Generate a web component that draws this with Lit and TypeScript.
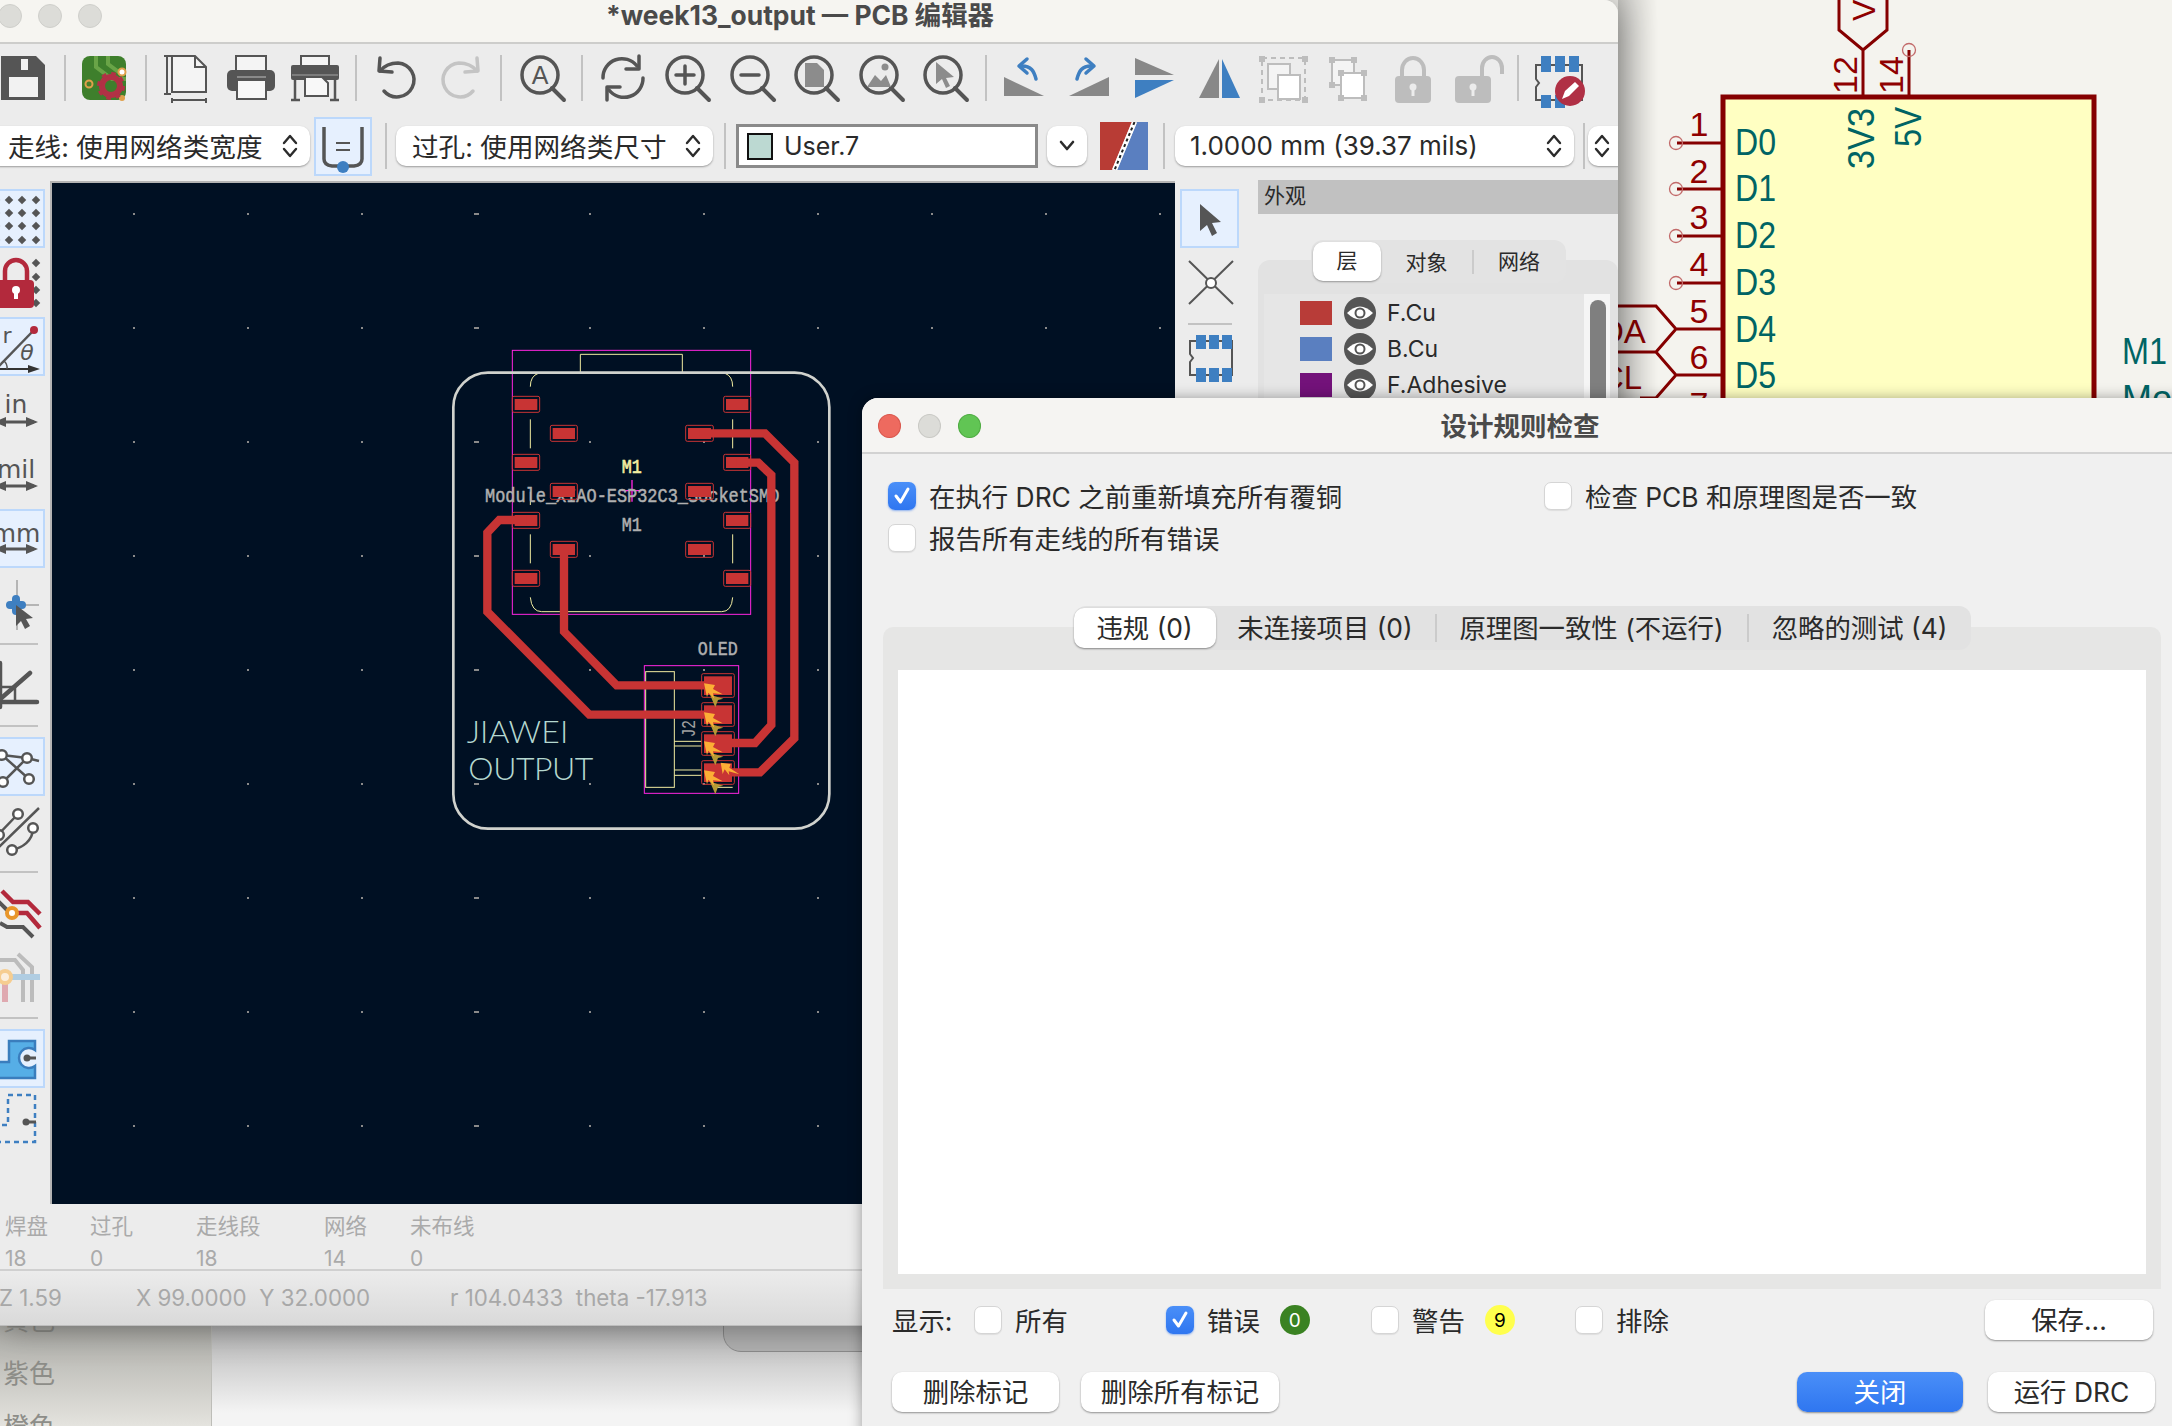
import { LitElement, html, svg, css } from "lit";
import { customElement } from "lit/decorators.js";

const G = "#555";
const LIGHT = "#bdbdbd";

const box = (body: unknown) => html`<svg class="ic" viewBox="0 0 46 46" width="46" height="46">${body}</svg>`;

const mag = (inner: unknown) => box(svg`
  <circle cx="21" cy="20" r="18" fill="none" stroke=${G} stroke-width="3.5"></circle>
  <line x1="33" y1="33" x2="45" y2="45" stroke=${G} stroke-width="4" stroke-linecap="round"></line>
  ${inner}`);

const undoPath = (c: string) => svg`
  <path d="M7 16C12 10 18 8 25 8A17 17 0 1 1 11 36" fill="none" stroke=${c} stroke-width="3.5" stroke-linecap="round"></path>
  <path d="M7 3L6 16L19 17" fill="none" stroke=${c} stroke-width="3.5" stroke-linecap="round" stroke-linejoin="round"></path>`;

const toolbar = [
  box(svg`<path d="M0 1H35L44 10V45H0Z" fill=${G}></path>
    <rect x="20" y="4" width="7" height="11" fill="#f2f2f2"></rect>
    <rect x="8" y="22" width="29" height="20" fill="#f2f2f2"></rect>`),
  null,
  box(svg`<rect x="0" y="1" width="44" height="44" rx="8" fill="#3e7f2c"></rect>
    <path d="M14 1L14 12L30 24L44 24M26 1L26 9L38 18L44 18" fill="none" stroke="#69a447" stroke-width="4"></path>
    <circle cx="7" cy="29" r="3.5" fill="#4a7f2c" stroke="#e0a04a" stroke-width="2"></circle>
    <circle cx="40" cy="17" r="3.5" fill="#fff" stroke="#e0a04a" stroke-width="2"></circle>
    <circle cx="40" cy="43" r="3" fill="#e0a04a"></circle>
    <circle cx="29" cy="31" r="9" fill="none" stroke="#b13245" stroke-width="6"></circle>
    <circle cx="29" cy="31" r="12" fill="none" stroke="#b13245" stroke-width="4" stroke-dasharray="4.5 4.9"></circle>`),
  null,
  box(svg`<path d="M9 1H32L43 12V37H9Z" fill="#f4f4f4" stroke=${G} stroke-width="2"></path>
    <path d="M32 1V12H43" fill="none" stroke=${G} stroke-width="2"></path>
    <path d="M1 1H8M4 1V39M1 39H8M9 43V48M43 43V48M9 45H43" fill="none" stroke=${G} stroke-width="2"></path>`),
  box(svg`<rect x="8" y="1" width="30" height="16" fill="#f4f4f4" stroke=${G} stroke-width="2"></rect>
    <rect x="-1" y="15" width="48" height="21" rx="5" fill=${G}></rect>
    <line x1="9" y1="22" x2="38" y2="22" stroke="#8a8a8a" stroke-width="2"></line>
    <path d="M9 25H38V44H9Z" fill="#f8f8f8" stroke=${G} stroke-width="2"></path>`),
  box(svg`<rect x="9" y="1" width="28" height="10" fill="#f4f4f4" stroke=${G} stroke-width="2"></rect>
    <rect x="-1" y="10" width="48" height="15" rx="2" fill=${G}></rect>
    <line x1="0" y1="20" x2="46" y2="20" stroke="#8a8a8a" stroke-width="1.5"></line>
    <path d="M13 22H30L36 28V41H13Z" fill="#f8f8f8" stroke=${G} stroke-width="2"></path>
    <path d="M3 25V45M43 25V45M-1 45H8M38 45H47" fill="none" stroke=${G} stroke-width="2.5"></path>`),
  null,
  box(undoPath(G)),
  box(svg`<g transform="translate(46 0) scale(-1 1)">${undoPath("#c4c4c4")}</g>`),
  null,
  mag(svg`<text x="21" y="29" text-anchor="middle" class="ictxt" font-size="25" fill=${G}>A</text>`),
  null,
  box(svg`<path d="M3 23A19 19 0 0 1 37 11M43 23A19 19 0 0 1 9 35" fill="none" stroke=${G} stroke-width="3.5" stroke-linecap="round"></path>
    <path d="M39 1L39 14L26 14M7 45L7 32L20 32" fill="none" stroke=${G} stroke-width="3.5" stroke-linecap="round" stroke-linejoin="round"></path>`),
  mag(svg`<path d="M21 11V29M12 20H30" stroke=${G} stroke-width="3.5" stroke-linecap="round"></path>`),
  mag(svg`<path d="M12 20H30" stroke=${G} stroke-width="3.5" stroke-linecap="round"></path>`),
  mag(svg`<path d="M12 8H24L31 15V32H12Z" fill="#8c8c8c"></path>`),
  mag(svg`<path d="M9 32L17 20L23 26L28 20L33 32Z" fill="#8c8c8c"></path><circle cx="27" cy="12" r="3.5" fill="#8c8c8c"></circle>`),
  mag(svg`<path d="M14 7L14 29L20 24L24 33L28 31L24 23L32 22Z" fill="#8c8c8c"></path>`),
  null,
  box(svg`<path d="M1 41H41L1 22Z" fill="#888"></path>
    <path d="M33 24C31 16 28 11 19 11" fill="none" stroke="#3e7fc1" stroke-width="3.5" stroke-linecap="round"></path>
    <path d="M24 4L16 11L24 18" fill="none" stroke="#3e7fc1" stroke-width="3.5" stroke-linecap="round" stroke-linejoin="round"></path>`),
  box(svg`<path d="M1 41H41V22Z" fill="#888"></path>
    <path d="M9 24C11 16 14 11 23 11" fill="none" stroke="#3e7fc1" stroke-width="3.5" stroke-linecap="round"></path>
    <path d="M18 4L26 11L18 18" fill="none" stroke="#3e7fc1" stroke-width="3.5" stroke-linecap="round" stroke-linejoin="round"></path>`),
  box(svg`<path d="M3 3L42 20H3Z" fill="#888"></path><path d="M3 25H42L3 43Z" fill="#3e7fc1"></path>`),
  box(svg`<path d="M22 4V43H2Z" fill="#888"></path><path d="M25 4L43 43H25Z" fill="#3e7fc1"></path>`),
  box(svg`<rect x="1" y="3" width="43" height="42" fill="none" stroke=${LIGHT} stroke-width="2" stroke-dasharray="5 4"></rect>
    <path d="M-2 1h6v6h-6zM41 1h6v6h-6zM-2 42h6v6h-6zM41 42h6v6h-6z" fill=${LIGHT}></path>
    <rect x="7" y="9" width="22" height="25" fill="#f4f4f4" stroke=${LIGHT} stroke-width="2"></rect>
    <rect x="17" y="20" width="22" height="24" fill="#fff" stroke=${LIGHT} stroke-width="2"></rect>`),
  box(svg`<rect x="6" y="5" width="22" height="25" fill="#f4f4f4" stroke=${LIGHT} stroke-width="2"></rect>
    <rect x="15" y="18" width="23" height="25" fill="#fff" stroke=${LIGHT} stroke-width="2"></rect>
    <path d="M3 2h6v6h-6zM25 2h6v6h-6zM3 27h6v6h-6zM12 15h6v6h-6zM35 15h6v6h-6zM12 40h6v6h-6zM35 40h6v6h-6z" fill=${LIGHT}></path>`),
  box(svg`<path d="M12 24V15A11 12 0 0 1 34 15V24" fill="none" stroke=${LIGHT} stroke-width="4"></path>
    <rect x="5" y="21" width="36" height="27" rx="4" fill=${LIGHT}></rect>
    <circle cx="23" cy="32" r="3.5" fill="#ececec"></circle><rect x="21.5" y="32" width="3" height="9" fill="#ececec"></rect>`),
  box(svg`<path d="M27 24V13A10 11 0 0 1 47 13V19" fill="none" stroke=${LIGHT} stroke-width="4"></path>
    <rect x="0" y="21" width="36" height="27" rx="4" fill=${LIGHT}></rect>
    <circle cx="18" cy="32" r="3.5" fill="#ececec"></circle><rect x="16.5" y="32" width="3" height="9" fill="#ececec"></rect>`),
  null,
  box(svg`<path d="M0 10H46V45H0V32L3 28L0 24Z" fill="none" stroke=${G} stroke-width="2"></path>
    <path d="M5 1H15V17H5ZM19 1H29V17H19ZM33 1H43V17H33ZM5 40H15V53H5ZM19 40H29V53H19Z" fill="#3e7fc1"></path>
    <circle cx="34" cy="36" r="15" fill="#b03045"></circle>
    <path d="M26 44L29 36L39 27L43 31L33 41Z" fill="#fff"></path>`),
];

const btn = (body: unknown, on = false) => html`<div class="tbtn ${on ? "on" : ""}"><svg class="ic" viewBox="-14 0 59 59" width="59" height="59">${body}</svg></div>`;
const sideSep = html`<div class="sidesep"></div>`;

const dots = [-4, 9, 22, 36].flatMap((x) => [11, 24, 37, 51].map((y) => svg`<rect x=${x - 3} y=${y - 3} width="6" height="6" transform="rotate(45 ${x} ${y})" fill=${G}></rect>`));
const arrow2 = (y: number) => svg`<path d="M-4 ${y}H34" stroke=${G} stroke-width="3"></path><path d="M-6 ${y}L6 ${y - 5}V${y + 5}ZM38 ${y}L26 ${y - 5}V${y + 5}Z" fill=${G}></path>`;
const unit = (t: string, y: number, arrowY: number) => svg`<text x="16" y=${y} text-anchor="middle" class="ictxt dj" font-size="25" fill=${G}>${t}</text>${arrow2(arrowY)}`;
const ring = (x: number, y: number) => svg`<circle cx=${x} cy=${y} r="4.8" fill="#fff" stroke=${G} stroke-width="2.5"></circle>`;

const leftTools = [
  btn(dots, true),
  btn(svg`${[10, 24, 37, 50].map((y) => svg`<rect x="33" y=${y - 3} width="6" height="6" transform="rotate(45 36 ${y})" fill=${G}></rect>`)}
    <path d="M5 28V18A11 11 0 0 1 27 18V28" fill="none" stroke="#b3293c" stroke-width="4.5"></path>
    <rect x="-14" y="27" width="48" height="28" rx="4" fill="#b3293c"></rect>
    <circle cx="16" cy="37" r="4" fill="#fff"></circle><rect x="14" y="37" width="4" height="9" fill="#fff"></rect>`),
  btn(svg`<text x="7" y="26" text-anchor="middle" class="ictxt dj" font-size="22" fill=${G}>r</text>
    <text x="27" y="43" text-anchor="middle" class="ictxt dj" font-style="italic" font-size="22" fill=${G}>θ</text>
    <line x1="-2" y1="50" x2="34" y2="13" stroke=${G} stroke-width="2.5"></line>
    <circle cx="34" cy="13" r="4" fill="#b3293c"></circle>
    <path d="M-14 52H28" stroke="#333" stroke-width="2"></path><path d="M40 52L28 48V56Z" fill="#333"></path>
    <path d="M7 52A9 9 0 0 0 4 44" fill="none" stroke=${G} stroke-width="1.5"></path>`, true),
  btn(unit("in", 32, 41)),
  btn(unit("mil", 33, 41)),
  btn(unit("mm", 33, 40), true),
  btn(svg`<path d="M17 7V57M6 32H39" stroke="#b5b5b5" stroke-width="2"></path>
    <path d="M16 26V38M10 32H22" stroke="#3e7fc1" stroke-width="8" stroke-linecap="round"></path>
    <path d="M16 32V53L21 48L25 56L30 53L26 46L33 45Z" fill=${G}></path>`),
  sideSep,
  btn(svg`<path d="M0 8V52M-6 47H37" stroke=${G} stroke-width="4.5" stroke-linecap="round" fill="none"></path>
    <path d="M-3 47L30 18" stroke=${G} stroke-width="4.5" stroke-linecap="round"></path>
    <path d="M15 32V47M0 32H15" stroke=${G} stroke-width="2.5" fill="none"></path>`),
  sideSep,
  btn(svg`<path d="M2 18L27 21L39 24M2 18L29 42M3 45L27 21" fill="none" stroke=${G} stroke-width="2.5"></path>
    ${ring(2, 18)}${ring(27, 21)}${ring(3, 45)}${ring(29, 42)}`, true),
  btn(svg`<path d="M18 13L-6 38M-2 47L39 7M12 49C22 47 33 40 33 27" fill="none" stroke=${G} stroke-width="2.5"></path>
    ${ring(18, 13)}${ring(33, 27)}${ring(12, 49)}${ring(-1, 34)}`),
  sideSep,
  btn(svg`<path d="M2 8L13 19H28L40 31M18 30H27L40 45" fill="none" stroke="#b3293c" stroke-width="4.5"></path>
    <path d="M-3 17L7 27M0 40L7 44H23L33 54" fill="none" stroke=${G} stroke-width="4"></path>
    <circle cx="12" cy="30" r="5" fill="#fff" stroke="#e8962a" stroke-width="4"></circle>`),
  btn(svg`<path d="M-3 13H15L23 23V55M18 7L32 20V55" fill="none" stroke="#bcbcbc" stroke-width="4"></path>
    <line x1="12" y1="30" x2="40" y2="30" stroke="#b0cde2" stroke-width="6"></line>
    <line x1="5" y1="36" x2="5" y2="55" stroke="#dfa9b0" stroke-width="6"></line>
    <circle cx="5" cy="30" r="6" fill="#fbeedd" stroke="#f6cd90" stroke-width="4"></circle>`),
  sideSep,
  btn(svg`<path d="M-14 33H9V12H35V21A10 10 0 1 0 35 37V49H-14Z" fill="#56aee6" stroke="#3a7dbd" stroke-width="2.5"></path>
    <circle cx="27" cy="29" r="3.5" fill=${G}></circle><path d="M27 29H36" stroke=${G} stroke-width="3"></path>`, true),
  btn(svg`<path d="M-4 49H35V2H8V32H-4" fill="none" stroke="#3e7fc1" stroke-width="2.5" stroke-dasharray="5 4"></path>
    <circle cx="26" cy="29" r="3.5" fill=${G}></circle><path d="M26 29H36" stroke=${G} stroke-width="3"></path>`),
];

const chevron = html`<svg class="chev" viewBox="0 0 16 28" width="16" height="28">
  <path d="M2 11L8 4L14 11M2 17L8 24L14 17" fill="none" stroke="#2b2b2b" stroke-width="2.4" stroke-linecap="round" stroke-linejoin="round"></path></svg>`;

const gridX = Array.from({ length: 10 }, (_, i) => 134 + i * 114);
const gridY = Array.from({ length: 9 }, (_, i) => 214 + i * 114);

const pad = (x: number, y: number, w: number, h: number) => svg`
  <rect x=${x} y=${y} width=${w} height=${h} rx="5" fill="none" stroke="#c83434" stroke-width="3"></rect>
  <rect x=${x + 7} y=${y + 8} width=${w - 14} height=${h - 15} fill="#c83434"></rect>`;

const marker = (x: number, y: number) => svg`<g transform="translate(${x} ${y})">
  <path d="M18 34L58 46L42 50L34 72Z" fill="#b49a35"></path>
  <path d="M0 0L33 5L27 17L56 33L27 30L31 46L13 28L9 42Z" fill="#fcae35"></path></g>`;

const pcb = html`<svg class="board" viewBox="52 181 1123 1023" width="1123" height="1023">
  ${gridX.flatMap((x) => gridY.map((y) => x === 476
    ? svg`<rect x=${x - 2} y=${y - 1} width="5" height="2" fill="#8a8a8a"></rect>`
    : svg`<rect x=${x - 1} y=${y - 1} width="2" height="2" fill="#8a8a8a"></rect>`))}
  <g transform="translate(440 340) scale(.33333)">
    <rect x="217" y="31" width="715" height="792" fill="none" stroke="#ff26e2" stroke-width="3"></rect>
    <rect x="613" y="977" width="283" height="383" fill="none" stroke="#ff26e2" stroke-width="3"></rect>
    <path d="M421 98V43H727V98M271 140Q271 108 295 100M855 100Q878 108 878 140M271 238V325M878 238V325M271 583V670M878 583V670M271 455V495M271 772Q275 815 305 815H845Q875 815 878 772" fill="none" stroke="#f2eda1" stroke-width="3"></path>
    <rect x="617" y="995" width="86" height="347" fill="none" stroke="#f2eda1" stroke-width="3"></rect>
    <path d="M703 1204H785M703 1218H785M703 1290H785M703 1306H785M830 1342H878" fill="none" stroke="#f2eda1" stroke-width="3"></path>
    <rect x="40" y="98" width="1128" height="1368" rx="104" fill="none" stroke="#d0d2cd" stroke-width="8"></rect>
    <path d="M576 420V485M545 452H605" stroke="#ff26e2" stroke-width="4"></path>
    <text x="135" y="485" textLength="883" lengthAdjust="spacingAndGlyphs" class="mono" font-size="58" fill="#b0b0b0" stroke="#b0b0b0" stroke-width="1.5">Module_XIAO-ESP32C3_SocketSMD</text>
    <text x="545" y="398" textLength="60" lengthAdjust="spacingAndGlyphs" class="mono" font-size="58" fill="#f2eda1" stroke="#f2eda1" stroke-width="2">M1</text>
    <text x="545" y="572" textLength="60" lengthAdjust="spacingAndGlyphs" class="mono" font-size="58" fill="#b0b0b0" stroke="#b0b0b0" stroke-width="1.5">M1</text>
    <text x="773" y="946" textLength="120" lengthAdjust="spacingAndGlyphs" class="mono" font-size="58" fill="#b0b0b0" stroke="#b0b0b0" stroke-width="1.5">OLED</text>
    <text transform="translate(766 1192) rotate(-90)" textLength="52" lengthAdjust="spacingAndGlyphs" class="mono" font-size="58" fill="#a0a0a0">J2</text>
    <text x="80" y="1210" textLength="305" class="thin" font-size="96" fill="#b5d8d0">JIAWEI</text>
    <text x="85" y="1320" textLength="375" class="thin" font-size="96" fill="#b5d8d0">OUTPUT</text>
    ${[169, 343, 517, 691].map((y) => svg`${pad(217, y, 82, 48)}${pad(851, y, 81, 48)}`)}
    ${[256, 430, 604].map((y) => svg`${pad(331, y, 81, 48)}${pad(737, y, 83, 48)}`)}
    ${[1001, 1088, 1175, 1262].map((y) => pad(785, y, 98, 71))}
    <path d="M780 280H975L1063 368V1195L960 1297H870M890 368H955L994 405V1155L945 1209H830M260 540H178L142 578V815L448 1124H800M372 628V875L530 1036H800" fill="none" stroke="#c83434" stroke-width="25"></path>
    ${[1030, 1117, 1204, 1291].map((y) => marker(792, y))}
    <path d="M842 1268L872 1272L868 1283L898 1303L866 1294L868 1306L854 1288L848 1302Z" fill="#fcae35"></path>
  </g>
</svg>`;

const PIN_Y = [143, 189, 236, 283, 329, 375];
const LABEL_Y = [155, 201, 248, 295, 342, 388];
const NUM_Y = [136, 183, 229, 276, 323, 369];

const schematic = html`<svg class="sch" viewBox="1600 0 572 420" width="572" height="420">
  <rect x="1723" y="97" width="371" height="330" fill="#ffffc2" stroke="#850000" stroke-width="5"></rect>
  <path d="M1839 -2V30L1863 50L1887 30V-2M1863 50V97" fill="none" stroke="#850000" stroke-width="3"></path>
  <path d="M1909 50V97" stroke="#850000" stroke-width="3"></path>
  <circle cx="1909" cy="50" r="6.5" fill="none" stroke="#c26a6a" stroke-width="1.3"></circle>
  <text transform="translate(1875 21) rotate(-90)" class="sc red" font-size="32">V</text>
  <text transform="translate(1857 94) rotate(-90)" class="sc red" font-size="34">12</text>
  <text transform="translate(1903 94) rotate(-90)" class="sc red" font-size="34">14</text>
  <text transform="translate(1874 169) rotate(-90)" textLength="61" lengthAdjust="spacingAndGlyphs" class="sc teal" font-size="36">3V3</text>
  <text transform="translate(1921 147) rotate(-90)" textLength="40" lengthAdjust="spacingAndGlyphs" class="sc teal" font-size="36">5V</text>
  ${PIN_Y.map((y, i) => svg`
    <path d="M1677 ${y}H1723" stroke="#850000" stroke-width="3"></path>
    ${i < 4 ? svg`<circle cx="1676" cy=${y} r="6.5" fill="none" stroke="#c26a6a" stroke-width="1.3"></circle>` : ""}
    <text x="1699" y=${NUM_Y[i]} text-anchor="middle" class="sc red" font-size="34">${i + 1}</text>
    <text x="1735" y=${LABEL_Y[i]} textLength="41" lengthAdjust="spacingAndGlyphs" class="sc teal" font-size="36">D${i}</text>`)}
  <text x="1699" y="416" text-anchor="middle" class="sc red" font-size="34">7</text>
  <path d="M1600 306H1656L1676 329L1656 352H1600M1656 352L1676 375L1656 398H1640" fill="none" stroke="#850000" stroke-width="3"></path>
  <text x="1600" y="343" class="sc red" font-size="33">DA</text>
  <text x="1600" y="389" class="sc red" font-size="33">CL</text>
  <text x="2122" y="364" textLength="45" lengthAdjust="spacingAndGlyphs" class="sc teal" font-size="36">M1</text>
  <text x="2122" y="411" class="sc teal" font-size="36">Mo</text>
</svg>`;

const eye = html`<svg viewBox="-16 -16 32 32" width="32" height="32">
  <circle r="16" fill=${G}></circle>
  <path d="M-13 0Q0 -13 13 0Q0 13 -13 0Z" fill="#fff"></path>
  <circle r="4.5" fill="#fff" stroke=${G} stroke-width="2"></circle></svg>`;

const check = html`<svg viewBox="0 0 28 28" width="28" height="28">
  <path d="M8 14L12.5 20L20 7" fill="none" stroke="#fff" stroke-width="3" stroke-linecap="round" stroke-linejoin="round"></path></svg>`;

const cb = (on = false) => html`<span class="cb ${on ? "on" : ""}">${on ? check : ""}</span>`;

@customElement("app-root")
export class AppRoot extends LitElement {
  static styles = css`
    :host {
      display: block;
      position: relative;
      width: 2172px;
      height: 1426px;
      overflow: hidden;
      background: #f4f3ee;
      font-family: Inter, "Noto Sans CJK SC", sans-serif;
      color: #2a2a2a;
    }
    .ic { overflow: visible; display: block; }
    .ic text, .ictxt { font-family: "Liberation Sans", sans-serif; }
    .ictxt.dj { font-family: "DejaVu Sans", sans-serif; }

    /* windows on the desktop */
    .sch { position: absolute; left: 1600px; top: 0; }
    .sc { font-family: "Liberation Sans", sans-serif; }
    .red { fill: #8f0000; }
    .teal { fill: #006464; }
    .back {
      position: absolute;
      left: 0;
      top: 1294px;
      width: 900px;
      height: 132px;
      display: flex;
    }
    .back-side {
      width: 212px;
      padding-left: 3px;
      box-sizing: border-box;
      background: linear-gradient(#9c9c97, #e4e3de);
      color: #8d8d88;
      font-size: 26px;
      line-height: 53px;
      border-right: 1px solid #bdbdb8;
    }
    .back-main {
      flex: 1;
      background: linear-gradient(#9f9f9f, #b9b9b9 28%, #f4f4f4 90%);
    }
    .back-box {
      margin: 0 0 0 511px;
      height: 56px;
      border: 1px solid #8c8c8c;
      border-radius: 0 0 0 18px;
      background: #b2b2b2;
    }
    .pcbwin {
      position: absolute;
      left: 0;
      top: 0;
      width: 1618px;
      height: 1326px;
      background: #ececec;
      border-radius: 0 14px 0 0;
      overflow: hidden;
      display: flex;
      flex-direction: column;
      box-shadow: 0 0 36px rgba(0, 0, 0, .45);
    }
    .pcbshadow {
      position: absolute;
      left: 1618px;
      top: 0;
      width: 40px;
      height: 400px;
      background: linear-gradient(90deg, rgba(0, 0, 0, .16), rgba(0, 0, 0, 0));
    }
    .title {
      height: 44px;
      flex: none;
      box-sizing: border-box;
      background: #f6f5f1;
      border-bottom: 2px solid #cdcdcb;
      display: flex;
      align-items: flex-start;
      justify-content: center;
      padding-right: 18px;
      font-weight: 700;
      font-size: 26.4px;
      line-height: 30px;
      color: #4a4a4a;
      position: relative;
    }
    .lights { position: absolute; left: -2px; top: 4px; display: flex; gap: 16px; }
    .lights i { width: 24px; height: 24px; border-radius: 50%; background: #dcdcd8; border: 1px solid #cfcfcb; box-sizing: border-box; }

    .tools {
      height: 71px;
      flex: none;
      box-sizing: border-box;
      padding: 11px 0 0 0;
      margin-left: 1px;
      display: flex;
      gap: 18.5px;
    }
    .vsep { width: 2px; height: 46px; margin: 0 -2px; background: #c2c2c2; flex: none; }

    .row2 { height: 65px; flex: none; box-sizing: border-box; padding-bottom: 3px; display: flex; align-items: center; }
    .sel {
      height: 40px;
      box-sizing: border-box;
      flex: none;
      background: #fff;
      border-radius: 10px;
      box-shadow: 0 1px 2px rgba(0, 0, 0, .35);
      display: flex;
      align-items: center;
      justify-content: space-between;
      font-size: 26.6px;
      padding-right: 12px;
    }
    .sel span { margin-top: -2px; }
    .s1 { margin-left: -10px; width: 320px; padding-left: 18px; }
    .s2 { margin-left: 9px; width: 317px; padding-left: 16px; }
    .s3 { margin-left: 10px; width: 399px; padding-left: 15px; font-size: 26px; }
    .s4 { margin-left: 3px; width: 40px; padding: 0 0 0 6px; }
    .hl {
      margin-left: 4px;
      width: 58px;
      height: 59px;
      box-sizing: border-box;
      flex: none;
      background: #e6f0fe;
      border: 2px solid #bcd8fb;
    }
    .rsep { width: 2px; height: 46px; background: #c2c2c2; flex: none; }
    .m13 { margin-left: 13px; }
    .m10 { margin-left: 11px; }
    .m15 { margin-left: 15px; }
    .m9 { margin-left: 9px; }
    .layer {
      margin-left: 10px;
      width: 302px;
      height: 44px;
      box-sizing: border-box;
      flex: none;
      background: #fff;
      border: 3px solid #8a8a8a;
      display: flex;
      align-items: center;
      padding-left: 8px;
      gap: 11px;
      font-size: 25px;
    }
    .swatch { width: 26px; height: 27px; box-sizing: border-box; background: #bcd9d2; border: 2px solid #111; }
    .drop { margin-left: 9px; width: 40px; padding: 0; justify-content: center; }
    .swap { margin-left: 13px; flex: none; display: block; }

    .main { flex: 1; display: flex; min-height: 0; }
    .leftbar { width: 50px; flex: none; overflow: hidden; padding-top: 9px; box-sizing: border-box; display: flex; flex-direction: column; gap: 5px; }
    .tbtn { width: 59px; height: 59px; flex: none; box-sizing: border-box; margin-left: -14px; position: relative; }
    .tbtn.on { background: #e6f0fe; box-shadow: inset 0 0 0 2px #bcd8fb; }
    .leftbar .ic { overflow: hidden; }
    .sidesep { width: 38px; height: 2px; margin: 5.5px 0; background: #c2c2c2; flex: none; }
    .canvas { width: 1123px; flex: none; margin-top: 1px; background: #001023; border-left: 2px solid #b4b4b4; border-top: 2px solid #b4b4b4; overflow: hidden; }
    .board { display: block; margin: -2px 0 0 0; }
    .mono { font-family: "Liberation Mono", monospace; }
    .thin { font-family: Lato, "Liberation Sans", sans-serif; font-weight: 300; }
    .rightbar { width: 83px; flex: none; padding: 9px 0 0 5px; box-sizing: border-box; display: flex; flex-direction: column; gap: 5px; }
    .rightbar .tbtn { margin-left: 0; }
    .rightbar .sidesep { width: 44px; margin: 5.5px 0 5.5px 8px; }
    .panel { flex: 1; min-width: 0; }
    .phead { height: 34px; background: #c1c1c1; font-size: 21px; line-height: 32px; padding-left: 6px; }
    .ptabs {
      margin: 26px 0 0 53px;
      width: 255px;
      height: 43px;
      box-sizing: border-box;
      padding: 2px;
      border-radius: 12px;
      background: #e3e3e3;
      display: flex;
      align-items: center;
      font-size: 21px;
      position: relative;
      z-index: 1;
    }
    .ptabs b { font-weight: 400; text-align: center; }
    .ptabs .sel-tab { width: 68px; height: 39px; line-height: 37px; background: #fff; border-radius: 10px; box-shadow: 0 1px 2px rgba(0, 0, 0, .35); }
    .ptabs .t2 { width: 91px; margin-top: -2px; }
    .ptabs .t3 { flex: 1; border-left: 2px solid #cbcbcb; line-height: 24px; }
    .pbody { margin-top: -23px; height: 600px; background: #e2e2e2; border-radius: 12px 12px 0 0; padding: 34px 8px 0 6px; }
    .plist { height: 600px; background: #e6e6e6; display: flex; }
    .rows { flex: 1; padding: 3px 0 0 36px; display: flex; flex-direction: column; gap: 4px; }
    .lrow { height: 32px; display: flex; align-items: center; font-size: 23px; }
    .lsw { width: 32px; height: 24px; flex: none; margin-right: 12px; }
    .lrow span { margin-left: 11px; }
    .scroll { width: 26px; flex: none; background: #f5f5f5; padding: 6px 0 0 6px; box-sizing: border-box; }
    .scroll i { display: block; width: 16px; height: 300px; border-radius: 8px; background: #7f7f7f; }

    .msg { height: 67px; flex: none; box-sizing: border-box; border-bottom: 2px solid #d0d0d0; display: flex; padding: 8px 0 0 5px; color: #aaa; font-size: 21.5px; }
    .msg div { display: flex; flex-direction: column; gap: 3px; line-height: 29px; }
    .msg span { font-size: 21px; }
    .w85 { width: 85px; }
    .w106 { width: 106px; }
    .w128 { width: 128px; }
    .w86 { width: 86px; }
    .status {
      height: 55px;
      flex: none;
      box-sizing: border-box;
      display: flex;
      align-items: center;
      padding-bottom: 2px;
      color: #a8a8a8;
      font-size: 22.3px;
      white-space: pre;
      background: linear-gradient(#ececec, #d9d9d9);
      border-bottom: 1px solid #bdbdbd;
    }
    .z { margin-left: -1px; width: 137px; }
    .xy { width: 314px; }

    /* dialog */
    .dlg {
      position: absolute;
      left: 862px;
      top: 398px;
      width: 1320px;
      height: 1040px;
      background: #f0f0f0;
      border-radius: 16px 0 0 0;
      box-shadow: 0 0 14px rgba(0, 0, 0, .35);
      display: flex;
      flex-direction: column;
      overflow: hidden;
    }
    .dtitle {
      height: 56px;
      flex: none;
      box-sizing: border-box;
      background: #f5f4f2;
      border-bottom: 2px solid #d2d2d2;
      display: flex;
      align-items: center;
      justify-content: center;
      padding: 0 0 2px 6px;
      width: 1310px;
      font-size: 26.5px;
      font-weight: 700;
      color: #4a4a4a;
      position: relative;
    }
    .dl { position: absolute; left: 16px; top: 16px; display: flex; gap: 17px; }
    .dl i { width: 23px; height: 24px; border-radius: 50%; box-sizing: border-box; }
    .dl .r { background: #ee6a5f; border: 1px solid #d9564c; }
    .dl .g { background: #dcdcd8; border: 1px solid #c9c9c5; }
    .dl .v { background: #61c554; border: 1px solid #4dab41; }
    .opts {
      margin: 28px 0 0 26px;
      display: grid;
      grid-template-columns: 656px 1fr;
      row-gap: 14px;
      font-size: 26.4px;
    }
    .ck { display: flex; align-items: center; gap: 13px; height: 28px; white-space: nowrap; }
    .t { margin-top: -2px; }
    .cb {
      width: 28px;
      height: 28px;
      flex: none;
      box-sizing: border-box;
      border-radius: 7px;
      background: #fff;
      border: 1px solid #d5d5d5;
      box-shadow: 0 1px 1px rgba(0, 0, 0, .08);
      display: block;
    }
    .cb.on { background: linear-gradient(#4a8ff8, #2f76f0); border: none; box-shadow: 0 1px 2px rgba(47, 118, 240, .5); }
    .cb svg { display: block; }
    .nb { margin: 54px 0 0 21px; width: 1278px; }
    .dtabs {
      margin: 0 auto;
      width: 897px;
      height: 44px;
      box-sizing: border-box;
      padding: 2px 0;
      border-radius: 12px;
      background: #e2e2e2;
      display: flex;
      align-items: center;
      font-size: 26.4px;
      position: relative;
      z-index: 1;
    }
    .dtabs b { font-weight: 400; text-align: center; white-space: nowrap; line-height: 28px; }
    .dtabs .sel-tab { width: 142px; height: 40px; line-height: 40px; background: #fff; border-radius: 10px; box-shadow: 0 1px 2px rgba(0, 0, 0, .4); }
    .dtabs .a { width: 219px; }
    .dtabs .b { width: 310px; border-left: 2px solid #cbcbcb; }
    .dtabs .c { flex: 1; border-left: 2px solid #cbcbcb; }
    .pane { margin-top: -23px; background: #e6e6e5; border-radius: 10px 10px 0 0; padding: 43px 15px 15px; }
    .list { height: 604px; background: #fff; }
    .showrow { margin: 11px 0 0 30px; width: 1261px; height: 40px; display: flex; align-items: center; font-size: 26.4px; }
    .shw { width: 82px; margin-top: -2px; }
    .f1 { width: 192px; }
    .f2 { width: 205px; }
    .f3 { width: 204px; }
    .badge { width: 30px; height: 30px; border-radius: 50%; margin-left: 7px; display: grid; place-items: center; font-size: 19px; flex: none; }
    .green { background: #3a8222; color: #fff; }
    .yellow { background: #ffff4d; color: #000; }
    .pb {
      height: 40px;
      box-sizing: border-box;
      flex: none;
      padding-bottom: 3px;
      background: #fff;
      border-radius: 10px;
      box-shadow: 0 1px 2px rgba(0, 0, 0, .4);
      display: flex;
      align-items: center;
      justify-content: center;
      font-size: 26.4px;
    }
    .save { margin-left: auto; width: 168px; }
    .btnrow { margin: 32px 0 0 30px; width: 1263px; display: flex; gap: 22px; }
    .b1 { width: 167px; }
    .b2 { width: 198px; }
    .close { margin-left: auto; width: 166px; background: linear-gradient(#4a8ff8, #2f76f0); color: #fff; }
    .drc { width: 167px; margin-left: 3px; }
  `;

  render() {
    return html`
      ${schematic}
      <div class="pcbshadow"></div>
      <div class="back">
        <div class="back-side">黄色<br />紫色<br />橙色</div>
        <div class="back-main"><div class="back-box"></div></div>
      </div>
      ${this.renderPcb()}
      ${this.renderDrc()}
    `;
  }

  private renderPcb() {
    return html`<div class="pcbwin">
      <div class="title">
        <div class="lights"><i></i><i></i><i></i></div>
        *week13_output — PCB 编辑器
      </div>
      <div class="tools">
        ${toolbar.map((t) => (t === null ? html`<div class="vsep"></div>` : t))}
      </div>
      <div class="row2">
        <div class="sel s1"><span>走线: 使用网络类宽度</span>${chevron}</div>
        <div class="hl">
          <svg viewBox="0 0 54 55" width="54" height="55">
            <path d="M8 8V40Q8 46 16 47H38Q46 46 46 40V8" fill="none" stroke="#555" stroke-width="3.5"></path>
            <path d="M20 24H34M20 31H34" stroke="#555" stroke-width="2"></path>
            <circle cx="27" cy="48" r="6" fill="#3e7fc1"></circle>
          </svg>
        </div>
        <div class="rsep m13"></div>
        <div class="sel s2"><span>过孔: 使用网络类尺寸</span>${chevron}</div>
        <div class="rsep m10"></div>
        <div class="layer"><i class="swatch"></i>User.7</div>
        <div class="sel drop">
          <svg viewBox="0 0 16 12" width="16" height="12"><path d="M2 2L8 9L14 2" fill="none" stroke="#2b2b2b" stroke-width="2.6" stroke-linecap="round" stroke-linejoin="round"></path></svg>
        </div>
        <svg class="swap" viewBox="0 0 48 48" width="48" height="48">
          <path d="M0 0H32L12 48H0Z" fill="#b83c35"></path>
          <path d="M37 0H48V48H17Z" fill="#5a7fc0"></path>
          <path d="M34.5 0L14.5 48" stroke="#fff" stroke-width="5"></path>
          <path d="M34.5 0L14.5 48" stroke="#222" stroke-width="2" stroke-dasharray="3 3"></path>
        </svg>
        <div class="rsep m15"></div>
        <div class="sel s3"><span>1.0000 mm (39.37 mils)</span>${chevron}</div>
        <div class="rsep m9"></div>
        <div class="sel s4">${chevron}</div>
      </div>
      <div class="main">
        <div class="leftbar">${leftTools}</div>
        <div class="canvas">${pcb}</div>
        <div class="rightbar">
          ${btn(svg`<path d="M6 15V42L13 36L18 47L23 44L18 34L27 33Z" fill="#555"></path>`, true)}
          ${btn(svg`<path d="M-5 8L39 51M-5 51L39 8" stroke="#555" stroke-width="2"></path><circle cx="17" cy="30" r="5" fill="#fff" stroke="#555" stroke-width="2"></circle>`)}
          ${sideSep}
          ${btn(svg`<path d="M-4 6H38V40H-4V27L-1 23L-4 19Z" fill="none" stroke="#555" stroke-width="2"></path>
            <path d="M2 0H12V14H2ZM15 0H25V14H15ZM28 0H38V14H28ZM2 33H12V47H2ZM15 33H25V47H15ZM28 33H38V47H28Z" fill="#3e7fc1"></path>`)}
        </div>
        <div class="panel">
          <div class="phead">外观</div>
          <div class="ptabs">
            <b class="sel-tab">层</b>
            <b class="t2">对象</b>
            <b class="t3">网络</b>
          </div>
          <div class="pbody">
            <div class="plist">
              <div class="rows">
                <div class="lrow"><i class="lsw" style="background:#b83c38"></i>${eye}<span>F.Cu</span></div>
                <div class="lrow"><i class="lsw" style="background:#5a7fc0"></i>${eye}<span>B.Cu</span></div>
                <div class="lrow"><i class="lsw" style="background:#73127a"></i>${eye}<span>F.Adhesive</span></div>
              </div>
              <div class="scroll"><i></i></div>
            </div>
          </div>
        </div>
      </div>
      <div class="msg">
        <div class="w85">焊盘<span>18</span></div>
        <div class="w106">过孔<span>0</span></div>
        <div class="w128">走线段<span>18</span></div>
        <div class="w86">网络<span>14</span></div>
        <div>未布线<span>0</span></div>
      </div>
      <div class="status">
        <span class="z">Z 1.59</span>
        <span class="xy">X 99.0000  Y 32.0000</span>
        <span>r 104.0433  theta -17.913</span>
      </div>
    </div>`;
  }

  private renderDrc() {
    return html`<div class="dlg">
      <div class="dtitle">
        <div class="dl"><i class="r"></i><i class="g"></i><i class="v"></i></div>
        设计规则检查
      </div>
      <div class="opts">
        <label class="ck">${cb(true)}<span class="t">在执行 DRC 之前重新填充所有覆铜</span></label>
        <label class="ck">${cb()}<span class="t">检查 PCB 和原理图是否一致</span></label>
        <label class="ck">${cb()}<span class="t">报告所有走线的所有错误</span></label>
      </div>
      <div class="nb">
        <div class="dtabs">
          <b class="sel-tab">违规 (0)</b>
          <b class="a">未连接项目 (0)</b>
          <b class="b">原理图一致性 (不运行)</b>
          <b class="c">忽略的测试 (4)</b>
        </div>
        <div class="pane"><div class="list"></div></div>
      </div>
      <div class="showrow">
        <span class="shw">显示:</span>
        <label class="ck f1">${cb()}<span class="t">所有</span></label>
        <label class="ck f2">${cb(true)}<span class="t">错误</span> <span class="badge green">0</span></label>
        <label class="ck f3">${cb()}<span class="t">警告</span> <span class="badge yellow">9</span></label>
        <label class="ck">${cb()}<span class="t">排除</span></label>
        <div class="pb save">保存...</div>
      </div>
      <div class="btnrow">
        <div class="pb b1">删除标记</div>
        <div class="pb b2">删除所有标记</div>
        <div class="pb close">关闭</div>
        <div class="pb drc">运行 DRC</div>
      </div>
    </div>`;
  }
}
